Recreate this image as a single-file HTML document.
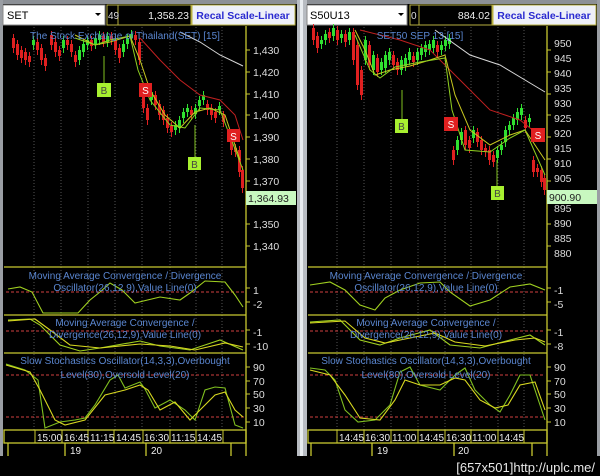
<!DOCTYPE html>
<html><head><meta charset="utf-8"><style>
html,body{margin:0;padding:0;background:#000;width:600px;height:476px;overflow:hidden}
svg{display:block}
text{font-family:"Liberation Sans",sans-serif}
</style></head><body>
<svg id="s" width="600" height="476" viewBox="0 0 600 476" xmlns="http://www.w3.org/2000/svg">
<rect width="600" height="476" fill="#000"/>
<!-- frames -->
<rect x="0" y="0" width="600" height="4" fill="#8c9096"/>
<rect x="0" y="0" width="3" height="456" fill="#9a9ea4"/>
<rect x="297" y="0" width="10" height="456" fill="#b8bcc2"/>
<rect x="300" y="0" width="3" height="456" fill="#e8ecf0"/>
<rect x="597" y="0" width="3" height="456" fill="#9a9ea4"/>
<!-- Left header -->
<rect x="3" y="5" width="102" height="20" fill="#fff" stroke="#888"/>
<text x="7" y="19" font-size="11" fill="#000">SET</text>
<path d="M95 13l3 3 3-3z" fill="#000"/>
<rect x="107" y="5" width="84" height="20" fill="#000" stroke="#b8b040"/>
<line x1="118" y1="5" x2="118" y2="25" stroke="#b8b040"/>
<text x="108" y="19" font-size="10" fill="#ddd">49</text>
<text x="189" y="19" font-size="10.5" fill="#eee" text-anchor="end">1,358.23</text>
<rect x="192" y="5" width="103" height="20" fill="#eef0f8" stroke="#b8b040"/>
<text x="243" y="19" font-size="10.5" fill="#2a2ad0" font-weight="bold" text-anchor="middle">Recal Scale-Linear</text>
<!-- Right header -->
<rect x="307" y="5" width="100" height="20" fill="#fff" stroke="#888"/>
<text x="310" y="19" font-size="11" fill="#000">S50U13</text>
<path d="M398 13l3 3 3-3z" fill="#000"/>
<rect x="410" y="5" width="82" height="20" fill="#000" stroke="#b8b040"/>
<line x1="419" y1="5" x2="419" y2="25" stroke="#b8b040"/>
<text x="411" y="19" font-size="10" fill="#ddd">0</text>
<text x="490" y="19" font-size="10.5" fill="#eee" text-anchor="end">884.02</text>
<rect x="493" y="5" width="103" height="20" fill="#eef0f8" stroke="#b8b040"/>
<text x="544" y="19" font-size="10.5" fill="#2a2ad0" font-weight="bold" text-anchor="middle">Recal Scale-Linear</text>

<g id="grid" stroke="#555" stroke-dasharray="1,2" stroke-width="1"></g>
<g id="cand"></g>

<!-- axes & separators left -->
<g stroke="#c8c830" stroke-width="1.3" fill="none">
<line x1="246" y1="26" x2="246" y2="456"/>
<line x1="4" y1="267" x2="246" y2="267"/>
<line x1="4" y1="315" x2="246" y2="315"/>
<line x1="4" y1="353" x2="246" y2="353"/>
<rect x="4" y="430" width="242" height="13"/>
<line x1="8" y1="443" x2="8" y2="456"/><line x1="65" y1="443" x2="65" y2="456"/><line x1="146" y1="443" x2="146" y2="456"/><line x1="231" y1="443" x2="231" y2="456"/>
<line x1="547" y1="26" x2="547" y2="456"/>
<line x1="308" y1="267" x2="547" y2="267"/>
<line x1="308" y1="315" x2="547" y2="315"/>
<line x1="308" y1="353" x2="547" y2="353"/>
<rect x="308" y="430" width="239" height="13"/>
<line x1="311" y1="443" x2="311" y2="456"/><line x1="372" y1="443" x2="372" y2="456"/><line x1="454" y1="443" x2="454" y2="456"/><line x1="532" y1="443" x2="532" y2="456"/>
</g>
<g stroke="#c8c830" stroke-width="1" id="ticks"></g>
<!-- time labels -->
<g font-size="10" fill="#eee" stroke="none">
<g stroke="#c8c830" fill="none"><path d="M35 430v13M62 430v13M88 430v13M114 430v13M143 430v13M170 430v13M196 430v13M223 430v13M337 430v13M364 430v13M391 430v13M418 430v13M445 430v13M471 430v13M498 430v13M524 430v13"/></g>
<text x="37" y="441">15:00</text><text x="64" y="441">16:45</text><text x="90" y="441">11:15</text><text x="116" y="441">14:45</text><text x="144" y="441">16:30</text><text x="171" y="441">11:15</text><text x="197" y="441">14:45</text>
<text x="70" y="454">19</text><text x="151" y="454">20</text>
<text x="339" y="441">14:45</text><text x="365" y="441">16:30</text><text x="392" y="441">11:00</text><text x="419" y="441">14:45</text><text x="446" y="441">16:30</text><text x="472" y="441">11:00</text><text x="499" y="441">14:45</text>
<text x="377" y="454">19</text><text x="458" y="454">20</text>
</g>
<!-- price labels -->
<g font-size="10.5" fill="#ddd">
<text x="253" y="54">1,430</text><text x="253" y="76">1,420</text><text x="253" y="98">1,410</text><text x="253" y="119">1,400</text><text x="253" y="141">1,390</text><text x="253" y="163">1,380</text><text x="253" y="185">1,370</text><text x="253" y="228">1,350</text><text x="253" y="250">1,340</text>
<text x="253" y="294">1</text><text x="253" y="308">-2</text><text x="253" y="336">-1</text><text x="253" y="350">-10</text>
<text x="253" y="371">90</text><text x="253" y="385">70</text><text x="253" y="398">50</text><text x="253" y="412">30</text><text x="253" y="426">10</text>
<text x="554" y="47">950</text><text x="554" y="62">945</text><text x="554" y="77">940</text><text x="554" y="92">935</text><text x="554" y="107">930</text><text x="554" y="122">925</text><text x="554" y="137">920</text><text x="554" y="152">915</text><text x="554" y="167">910</text><text x="554" y="182">905</text><text x="554" y="212">895</text><text x="554" y="227">890</text><text x="554" y="242">885</text><text x="554" y="257">880</text>
<text x="554" y="294">-1</text><text x="554" y="308">-5</text><text x="554" y="336">-1</text><text x="554" y="350">-8</text>
<text x="554" y="371">90</text><text x="554" y="385">70</text><text x="554" y="398">50</text><text x="554" y="412">30</text><text x="554" y="426">10</text>
</g>
<rect x="246" y="191" width="50" height="14" fill="#c8f8c0"/>
<text x="248" y="202" font-size="10.5" fill="#222">1,364.93</text>
<rect x="547" y="190" width="50" height="14" fill="#c8f8c0"/>
<text x="549" y="201" font-size="10.5" fill="#222">900.90</text>

<!-- dashed indicator levels -->
<g stroke="#d04040" stroke-dasharray="3,2" stroke-width="1">
<path d="M6 292H244M6 331H244M6 375H244M6 417H244M310 292H545M310 331H545M310 375H545M310 417H545"/>
</g>

<!-- MA lines -->
<g fill="none" stroke-width="1">
<polyline stroke="#d8d8d8" points="180,32 200,42 220,55 243,66"/>
<polyline stroke="#c02020" points="140,38 160,60 180,80 200,95 220,100 235,115 243,140"/>
<polyline stroke="#c8c820" points="75,35 95,45 110,42 130,36 140,60 150,90 165,115 180,128 195,112 210,108 225,115 240,160"/>
<polyline stroke="#90d020" points="75,38 95,45 110,40 130,36 138,70 150,100 170,125 185,128 200,108 220,110 243,170"/>
<polyline stroke="#d8d8d8" points="435,30 470,55 500,65 525,80 545,92"/>
<polyline stroke="#c02020" points="360,30 400,40 430,50 460,80 490,110 520,120 545,140"/>
<polyline stroke="#c8c820" points="355,30 365,50 375,75 390,70 410,66 430,60 445,55 455,95 470,130 490,145 510,135 525,130 545,160"/>
<polyline stroke="#90d020" points="355,35 370,70 380,78 395,67 420,62 445,58 452,110 465,150 490,152 510,138 525,130 545,175"/>
</g>

<!-- indicator lines left -->
<g fill="none" stroke-width="1.1">
<polyline stroke="#a0d020" points="8,289 20,287 32,292 43,313 78,313 90,300 100,292 110,283 122,290 135,303 160,297 180,300 190,293 205,281 225,282 235,295 243,307"/>
<polyline stroke="#a0d020" points="8,320 30,319 40,325 60,345 80,351 100,348 140,341 160,346 190,350 220,340 243,350"/>
<polyline stroke="#d8d820" points="8,321 35,319 50,330 70,345 100,348 140,344 170,346 195,350 225,343 243,347"/>
<polyline stroke="#80c020" points="6,364 25,370 38,380 45,428 60,422 75,420 85,418 95,405 110,380 118,375 125,388 140,382 145,389 155,408 170,400 185,410 195,420 205,390 215,387 225,388 235,425 243,428"/>
<polyline stroke="#d8d820" points="6,365 30,372 40,390 55,420 65,425 85,420 105,395 125,390 140,385 148,390 160,410 175,402 190,420 200,410 215,395 225,392 235,410 243,417"/>
<!-- right -->
<polyline stroke="#a0d020" points="310,285 330,282 345,290 360,305 375,310 385,298 400,290 420,283 440,282 450,292 470,306 490,300 510,287 530,284 545,290"/>
<polyline stroke="#a0d020" points="310,322 340,320 360,340 380,345 400,338 430,330 450,345 480,348 510,340 530,335 545,345"/>
<polyline stroke="#d8d820" points="310,323 345,321 365,338 385,343 410,338 435,333 455,342 485,346 515,340 535,338 545,342"/>
<polyline stroke="#80c020" points="310,368 325,370 335,380 345,410 358,422 375,420 390,405 400,372 410,367 420,385 440,390 455,375 465,368 475,390 490,405 500,412 510,395 520,375 530,375 540,405 545,420"/>
<polyline stroke="#d8d820" points="310,370 330,375 345,395 360,418 380,420 395,400 405,380 420,385 440,385 455,378 465,380 480,400 495,408 508,405 520,385 535,382 545,410"/>
</g>

<!-- chart titles -->
<g fill="#5a86d0" font-size="10" text-anchor="middle">
<text x="125" y="39">The Stock Exchange of Thailand(SET) [15]</text>
<text x="125" y="279">Moving Average Convergence / Divergence</text>
<text x="125" y="291">Oscillator(26,12,9),Value Line(0)</text>
<text x="125" y="326">Moving Average Convergence /</text>
<text x="125" y="338">Divergence(26,12,9),Value Line(0)</text>
<text x="125" y="364">Slow Stochastics Oscillator(14,3,3),Overbought</text>
<text x="125" y="378">Level(80),Oversold Level(20)</text>
<text x="420" y="39">SET50 SEP 13   [15]</text>
<text x="426" y="279">Moving Average Convergence / Divergence</text>
<text x="426" y="291">Oscillator(26,12,9),Value Line(0)</text>
<text x="426" y="326">Moving Average Convergence /</text>
<text x="426" y="338">Divergence(26,12,9),Value Line(0)</text>
<text x="426" y="364">Slow Stochastics Oscillator(14,3,3),Overbought</text>
<text x="426" y="378">Level(80),Oversold Level(20)</text>
</g>

<!-- markers -->
<g stroke="#80c020"><line x1="104" y1="56" x2="104" y2="83"/><line x1="195" y1="125" x2="195" y2="157"/><line x1="402" y1="90" x2="402" y2="119"/><line x1="497" y1="160" x2="497" y2="186"/></g>
<g font-size="10" text-anchor="middle">
<rect x="97" y="83" width="14" height="14" fill="#a8f030"/><text x="104" y="94" fill="#444">B</text>
<rect x="188" y="157" width="13" height="13" fill="#a8f030"/><text x="194.5" y="168" fill="#444">B</text>
<rect x="395" y="119" width="13" height="14" fill="#a8f030"/><text x="401.5" y="130" fill="#444">B</text>
<rect x="491" y="186" width="13" height="14" fill="#a8f030"/><text x="497.5" y="197" fill="#444">B</text>
<rect x="139" y="83" width="13" height="14" fill="#e02020"/><text x="145.5" y="94" fill="#fff">S</text>
<rect x="227" y="129" width="13" height="13" fill="#e02020"/><text x="233.5" y="140" fill="#fff">S</text>
<rect x="444" y="117" width="14" height="14" fill="#e02020"/><text x="451" y="128" fill="#fff">S</text>
<rect x="531" y="128" width="14" height="14" fill="#e02020"/><text x="538" y="139" fill="#fff">S</text>
</g>

<!-- bottom strip -->
<rect x="0" y="456" width="600" height="20" fill="#000"/>
<text x="595" y="472" font-size="13" fill="#e8e8e8" text-anchor="end" font-family="Liberation Mono,monospace">[657x501]http://uplc.me/</text>
</svg>
<script>
var NS="http://www.w3.org/2000/svg";
function el(p,t,a){var e=document.createElementNS(NS,t);for(var k in a)e.setAttribute(k,a[k]);document.getElementById(p).appendChild(e);}
[34,61,88,115,142,170,196,222,337,364,391,418,445,471,498,524].forEach(function(x){el("grid","line",{x1:x,y1:27,x2:x,y2:430});});
[50,72,94,115,137,159,181,203,224,246,288,302,330,344,367,381,394,408,422].forEach(function(y){el("ticks","line",{x1:246,y1:y,x2:250,y2:y});el("ticks","line",{x1:547,y1:y,x2:551,y2:y});});
function candles(pts){pts.forEach(function(c){var x=c[0],o=c[1],cl=c[2],col=cl<o?"#30e030":"#e02020";var t=Math.min(o,cl),b=Math.max(o,cl);el("cand","line",{x1:x+1.5,y1:t-4,x2:x+1.5,y2:b+5,stroke:col});el("cand","rect",{x:x,y:t,width:3,height:Math.max(2,b-t),fill:col});});}
var L=[[50,35,45],[54,42,52],[58,50,56],[62,48,40],[66,40,45],[70,44,52],[74,55,62],[78,60,50],[82,52,44],[86,45,40],[90,40,46],[94,44,38],[98,40,35],[102,36,42],[106,42,36],[110,36,40],[114,40,50],[118,48,58],[122,52,44],[126,44,38],[130,38,34],[134,35,40],[138,42,60],[142,90,108],[146,108,120],[150,100,92],[154,95,105],[158,104,115],[162,110,120],[166,118,128],[170,126,132],[174,130,125],[178,128,120],[182,118,112],[186,112,108],[190,110,115],[194,114,108],[198,106,100],[202,100,95],[206,104,110],[210,108,115],[214,112,118],[218,110,106],[222,115,122],[230,140,150],[234,148,152],[238,150,172],[241,170,188]];
L=L.concat([[12,38,48],[16,44,55],[20,50,58],[24,52,60],[28,56,62],[32,45,40],[36,42,50],[40,48,60],[44,58,66]]);
candles(L);
var R=[[352,32,60],[356,45,85],[360,70,95],[364,60,40],[368,45,65],[372,70,55],[376,58,72],[380,70,62],[384,68,55],[388,60,52],[392,55,65],[396,62,70],[400,70,60],[404,66,58],[408,60,52],[412,56,62],[416,60,52],[420,55,48],[424,52,45],[428,50,44],[432,48,40],[436,45,52],[440,50,45],[444,46,40],[448,44,38],[452,150,160],[456,150,140],[460,140,132],[464,130,145],[468,140,148],[472,138,130],[476,132,142],[480,140,150],[484,148,152],[488,150,160],[492,155,162],[496,158,150],[500,150,145],[504,142,130],[508,130,125],[512,125,118],[516,120,112],[520,115,108],[524,120,128],[528,122,118],[532,160,172],[536,168,172],[540,170,182],[543,178,190],[312,28,40],[316,36,48],[320,44,40],[324,40,34],[328,32,38],[332,36,28],[336,30,40],[340,38,34],[344,34,42],[348,40,32]];
candles(R);
</script>
</body></html>
